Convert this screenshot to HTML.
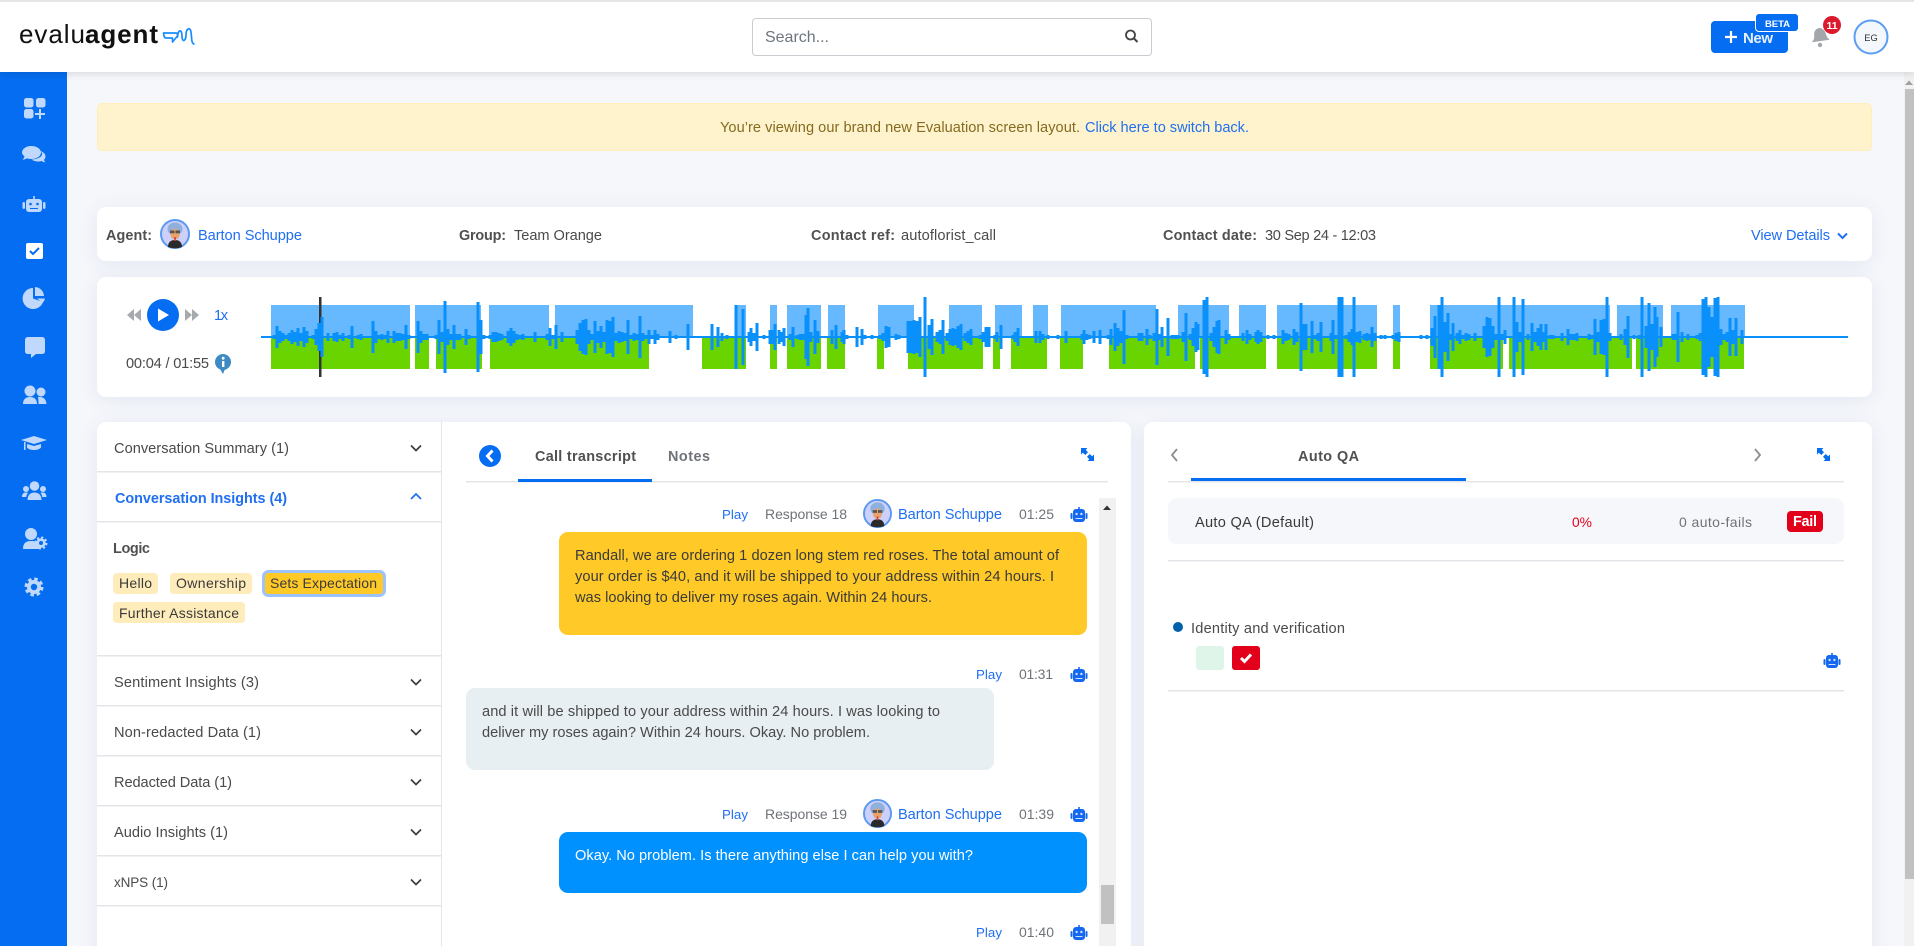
<!DOCTYPE html>
<html lang="en"><head><meta charset="utf-8"><title>Evaluation</title>
<style>
html,body{margin:0;padding:0;width:1914px;height:946px;overflow:hidden;background:#f5f7fb}
#p{position:absolute;left:0;top:0;width:1914px;height:946px;overflow:hidden;background:#f5f7fb}
.a{position:absolute;box-sizing:border-box}
.card{background:#fff;border-radius:9px;box-shadow:0 3px 20px rgba(60,80,140,.09)}
svg{position:absolute;left:0;top:0}
text{font-family:"Liberation Sans",Arial,sans-serif;font-size:14.6px;fill:#4a4a4a;white-space:pre}
.b{font-weight:700;font-size:14.4px;fill:#505050}.l{fill:#1f6ff0}.g{fill:#6f7378;font-size:14px}.d{fill:#3a3a3a}.t{font-size:14px}.pl{font-size:13.300px}
.side *{fill:#bfd8fb}
.side .h{fill:#056df1}
</style></head><body>
<div id="p">
<div class="a" style="left:0;top:0;width:1914px;height:72px;background:#fff;border-top:2px solid #e5e5e5;box-shadow:0 2px 8px rgba(0,0,0,.12);z-index:2"></div>
<div class="a" style="left:0;top:72px;width:67px;height:874px;background:#056df1"></div>
<div class="a" style="left:752px;top:18px;width:400px;height:38px;border:1px solid #c9ccd0;border-radius:4px;background:#fff;z-index:3"></div>
<div class="a" style="left:1711px;top:21px;width:77px;height:32px;background:#056df1;border-radius:4px;z-index:3"></div>
<div class="a" style="left:1755px;top:13px;width:44px;height:19px;background:#056df1;border:1px solid #fff;border-radius:4px;z-index:3"></div>
<div class="a" style="left:97px;top:103px;width:1775px;height:48px;background:#fff3cd;border:1px solid #ffeeba;border-radius:5px"></div>
<div class="a card" style="left:97px;top:207px;width:1775px;height:54px"></div>
<div class="a card" style="left:97px;top:277px;width:1775px;height:120px"></div>
<div class="a card" style="left:97px;top:422px;width:1034px;height:560px"></div>
<div class="a card" style="left:1144px;top:422px;width:728px;height:560px"></div>
<div class="a" style="left:1904px;top:72px;width:10px;height:874px;background:#f1f1f1"></div>
<div class="a" style="left:1905px;top:89px;width:9px;height:790px;background:#c1c1c1"></div>
<div class="a" style="left:1099px;top:498px;width:17px;height:448px;background:#f1f1f1"></div>
<div class="a" style="left:1101px;top:885px;width:13px;height:39px;background:#c1c1c1"></div>

<svg width="1914" height="946" viewBox="0 0 1914 946" style="z-index:5" xmlns="http://www.w3.org/2000/svg">
<defs>
<symbol id="bot" viewBox="0 0 18 15">
<rect x="8.2" y="0" width="1.6" height="3" fill="#1468f0"/><rect x="3" y="2" width="12" height="13" rx="3" fill="#1468f0"/><rect x=".5" y="6" width="2" height="6" rx="1" fill="#1468f0"/><rect x="15.5" y="6" width="2" height="6" rx="1" fill="#1468f0"/><circle cx="6.6" cy="7" r="1.2" fill="#cfe0ff"/><circle cx="11.4" cy="7" r="1.2" fill="#cfe0ff"/><rect x="5.5" y="11" width="7" height="1" fill="#cfe0ff"/>
</symbol>
<symbol id="ava" viewBox="0 0 30 30">
<circle cx="15" cy="15" r="14" fill="#cdd0fb" stroke="#5a9af0" stroke-width="2"/>
<path d="M8 28c0-5 3-7 7-7s7 2 7 7q-7 2.500-14 0z" fill="#2a2a2a"/>
<ellipse cx="15" cy="10" rx="7.500" ry="6.500" fill="#8fb0dc"/>
<rect x="10.500" y="10" width="9" height="10" rx="4" fill="#e9a36a"/>
<rect x="10" y="11.500" width="4.500" height="2.800" fill="#555"/><rect x="15.500" y="11.500" width="4.500" height="2.800" fill="#555"/>
<rect x="14.200" y="18" width="1.600" height="4" fill="#d8402c"/>
</symbol>
<symbol id="exp" viewBox="0 0 13 13">
<path d="M0 0h6.500L4.700 1.800 7 4.300 4.300 7 1.800 4.700 0 6.500zM13 13H6.500l1.800-1.800L6 8.700 8.700 6l2.500 2.300L13 6.500z" fill="#056df1"/>
</symbol>
</defs>

<!-- logo -->
<text x="19" y="43" style="font-size:26px;fill:#111" textLength="66">evalu</text>
<text x="85" y="43" class="b" style="font-size:26px;fill:#111" textLength="73">agent</text>
<path d="M163.500 33h12q2 0 2 1.500v1.500l-5 6v-4h-6q-2 0-2.500-2zM177.500 37c.5-8 4.500-8 4.500-1s4 5 4-1 4-9 5-3 0 11 3 12" fill="none" stroke="#1a8cff" stroke-width="1.700" stroke-linejoin="round" stroke-linecap="round"/>

<!-- search -->
<text x="765" y="42" style="font-size:16px;fill:#6c757d" textLength="64">Search...</text>
<circle cx="1130.500" cy="35" r="4.500" fill="none" stroke="#444" stroke-width="1.800"/><path d="M1134 38.500l3.500 3.500" stroke="#444" stroke-width="2"/>

<!-- new button -->
<path d="M1725 37h12M1731 31v12" stroke="#fff" stroke-width="2.200"/>
<text x="1743" y="43" class="b" style="font-size:15px;fill:#e6efff" textLength="30">New</text>
<text x="1765" y="27" class="b" style="font-size:9.500px;fill:#fff" textLength="25">BETA</text>
<!-- bell -->
<path d="M1811 41c3-2 3-4 3.500-8 .5-3 3-5 5.500-5s5 2 6 6c.5 3 1 5 3 7z" fill="#a3a7ab" transform="rotate(-8 1820 36)"/><circle cx="1820" cy="45" r="2.200" fill="#a3a7ab"/>
<circle cx="1832" cy="25" r="9" fill="#dc1a2e"/>
<text x="1832" y="29" class="b" text-anchor="middle" style="font-size:10.500px;fill:#fff">11</text>
<circle cx="1871" cy="37" r="16.500" fill="#f4f7fb" stroke="#5b9cf5" stroke-width="2"/>
<text x="1871" y="41" text-anchor="middle" style="font-size:9.300px;fill:#333">EG</text>

<!-- sidebar icons -->
<g class="side">
<rect x="24" y="98" width="9.500" height="9.500" rx="2.500"/><rect x="36" y="98" width="9.500" height="9.500" rx="2.500"/><rect x="24" y="109" width="9.500" height="9.500" rx="2.500"/><rect x="39" y="109" width="2" height="10"/><rect x="35" y="113" width="10" height="2"/>
<path d="M31 146c6 0 10 3 10 6.500S37 159 31 159c-1.500 0-3-.2-4-.7-1.500 1-3 1.400-4.500 1.300 1-.8 1.700-2 2-3.100C23 155 22 154 22 152.500c0-3.500 4-6.500 9-6.500z"/>
<path d="M40 151c3.500 1 5.500 3 5.500 5.500 0 1.200-.5 2.300-1.500 3.200.3 1 .8 1.900 1.500 2.500-1.500 0-3-.5-4-1.200-2.500.8-7 .8-10-1.500 5-.2 10-2 10.500-5 .2-1 .2-2 -2-3.500z"/>
<g transform="translate(0 2)"><rect x="33.200" y="194" width="1.600" height="4"/><rect x="26" y="197" width="16" height="13" rx="3"/><rect x="22.500" y="200" width="2.500" height="7" rx="1.200"/><rect x="43" y="200" width="2.500" height="7" rx="1.200"/><circle class="h" cx="30.500" cy="202" r="1.300"/><circle class="h" cx="37.500" cy="202" r="1.300"/><rect class="h" x="30" y="206" width="8" height="1"/></g>
<rect x="26" y="243" width="17" height="16" rx="2" style="fill:#fff"/><path d="M30 251l3 3 6-6" style="fill:none;stroke:#056df1;stroke-width:2"/>
<path d="M33 288a10.500 10.500 0 1 0 10 14l-10-3.500z"/><path d="M35 287a9.500 9.500 0 0 1 9 9h-9z"/><path d="M37 298.500h8a9 9 0 0 1-2.500 4.500z"/>
<path d="M28 337h14q3 0 3 3v11q0 3-3 3h-6l-5 4v-4h-3q-3 0-3-3v-11q0-3 3-3z"/>
<g transform="translate(0 3)"><circle cx="30" cy="388" r="5.500"/><path d="M23 401c0-5 3-7 7-7s7 2 7 7z"/><circle cx="41" cy="389" r="4.500"/><path d="M38 394c4-.5 8 1 8.500 7H38.500c0-3-.2-5-.5-7z"/></g>
<path d="M34 436l13 4-13 4-13-4z"/><path d="M27 444l7 2 7-2v3.500c-1 1.500-4 2.500-7 2.500s-6-1-7-2.500z"/><rect x="24" y="442" width="1.500" height="8"/>
<g transform="translate(0 2)"><circle cx="34.500" cy="484" r="4.800"/><path d="M27.500 498c0-5 3-7.500 7-7.500s7 2.500 7 7.500z"/><circle cx="26" cy="487" r="3"/><circle cx="43" cy="487" r="3"/><path d="M22 495c0-3 1.500-4.500 4-4.500 1 0 1.500.2 2 .5-1 1-1.500 2-1.700 4z"/><path d="M46.500 495c0-3-1.500-4.500-4-4.500-1 0-1.500.2-2 .5 1 1 1.500 2 1.700 4z"/></g>
<g transform="translate(0 2)"><circle cx="31" cy="532" r="6"/><path d="M23 547c0-6 3-8 8-8s7 1 8 3v5z"/><circle cx="41" cy="541" r="4.800"/><circle cx="41" cy="541" r="5.500" style="fill:none;stroke:#bfd8fb;stroke-width:2;stroke-dasharray:2.200 2.100"/><circle class="h" cx="41" cy="541" r="2"/></g>
<circle cx="34" cy="587" r="7"/><circle cx="34" cy="587" r="8" style="fill:none;stroke:#bfd8fb;stroke-width:3;stroke-dasharray:3.500 2.780"/><circle class="h" cx="34" cy="587" r="3.200"/>
</g>

<!-- banner -->
<text x="720" y="132" style="fill:#856b20" textLength="360">You’re viewing our brand new Evaluation screen layout.</text>
<text x="1085" y="132" class="l" textLength="164">Click here to switch back.</text>

<!-- agent row -->
<text x="106" y="240" class="b" textLength="46">Agent:</text>
<use href="#ava" x="160" y="219" width="30" height="30"/>
<text x="198" y="240" class="l" textLength="104">Barton Schuppe</text>
<text x="459" y="240" class="b" textLength="47">Group:</text>
<text x="514" y="240" textLength="88">Team Orange</text>
<text x="811" y="240" class="b" textLength="84">Contact ref:</text>
<text x="901" y="240" textLength="95">autoflorist_call</text>
<text x="1163" y="240" class="b" textLength="94">Contact date:</text>
<text x="1265" y="240" textLength="111">30 Sep 24 - 12:03</text>
<text x="1751" y="240" class="l" textLength="79">View Details</text>
<path d="M1838 233.500l4.500 4.500 4.500-4.500" fill="none" stroke="#1f6ff0" stroke-width="2"/>

<!-- player -->
<path d="M134 309v12l-7-6zM141 309v12l-7-6z" fill="#a6a9ad"/>
<circle cx="163" cy="315" r="16" fill="#056df1"/><path d="M158 308.500v13l11-6.500z" fill="#fff"/>
<path d="M185 309v12l7-6zM192 309v12l7-6z" fill="#a6a9ad"/>
<text x="214" y="320" class="l" textLength="14">1x</text>
<text x="126" y="368" textLength="83">00:04 / 01:55</text>
<circle cx="223" cy="362" r="8" fill="#3d8ac4"/><path d="M220 369l3 5 2-5z" fill="#3d8ac4"/><rect x="222" y="361" width="2.400" height="6" fill="#fff"/><circle cx="223.200" cy="358.200" r="1.400" fill="#fff"/>

<!-- waveform -->
<g fill="#66b8ff">
<rect x="271" y="305" width="139" height="32"/><rect x="415" y="305" width="66" height="32"/><rect x="489" y="305" width="60" height="32"/><rect x="555" y="305" width="138" height="32"/><rect x="735" y="305" width="11" height="32"/><rect x="770" y="305" width="7" height="32"/><rect x="787" y="305" width="34" height="32"/><rect x="828" y="305" width="17" height="32"/><rect x="878" y="305" width="36" height="32"/><rect x="949" y="305" width="33" height="32"/><rect x="995" y="305" width="27" height="32"/><rect x="1033" y="305" width="15" height="32"/><rect x="1061" y="305" width="95" height="32"/><rect x="1178" y="305" width="51" height="32"/><rect x="1239" y="305" width="27" height="32"/><rect x="1277" y="305" width="100" height="32"/><rect x="1393" y="305" width="7" height="32"/><rect x="1430" y="305" width="180" height="32"/><rect x="1617" y="305" width="46" height="32"/><rect x="1671" y="305" width="74" height="32"/>
</g>
<g fill="#6ad400">
<rect x="271" y="337" width="139" height="32"/><rect x="415" y="337" width="14" height="32"/><rect x="436" y="337" width="46" height="32"/><rect x="490" y="337" width="159" height="32"/><rect x="702" y="337" width="44" height="32"/><rect x="770" y="337" width="7" height="32"/><rect x="787" y="337" width="34" height="32"/><rect x="827" y="337" width="18" height="32"/><rect x="877" y="337" width="7" height="32"/><rect x="908" y="337" width="75" height="32"/><rect x="993" y="337" width="7" height="32"/><rect x="1011" y="337" width="36" height="32"/><rect x="1060" y="337" width="23" height="32"/><rect x="1109" y="337" width="86" height="32"/><rect x="1200" y="337" width="66" height="32"/><rect x="1277" y="337" width="100" height="32"/><rect x="1393" y="337" width="7" height="32"/><rect x="1430" y="337" width="73" height="32"/><rect x="1509" y="337" width="123" height="32"/><rect x="1636" y="337" width="108" height="32"/>
</g>
<rect x="319" y="297" width="2.500" height="80" fill="#333"/>
<rect x="261" y="336" width="1587" height="2" fill="#0a90fb"/>
<path fill="none" stroke="#0a90fb" stroke-width="3" d="M274 337v-2v4M277 337v-11v22M280 337v-6v12M283 337v-4v8M286 337v-2v4M289 337v-4v8M292 337v-7v14M295 337v-5v10M298 337v-9v18M301 337v-4v8M304 337v-10v20M307 337v-6v12M313 337v-2v4M316 337v-8v16M319 337v-14v28M322 337v-20v40M328 337v-4v8M334 337v-4v8M337 337v-5v10M340 337v-2v4M343 337v-4v8M349 337v-2v4M352 337v-11v22M358 337v-2v4M361 337v-3v6M373 337v-16v32M376 337v-6v12M379 337v-2v4M382 337v-3v6M385 337v-2v4M388 337v-6v12M394 337v-6v12M397 337v-4v8M400 337v-4v8M403 337v-3v6M406 337v-12v24M409 337v-2v4M418 337v-16v32M421 337v-6v12M424 337v-3v6M427 337v-3v6M436 337v-2v4M439 337v-17v34M442 337v-5v10M445 337v-36v72M448 337v-8v16M451 337v-3v6M454 337v-12v24M457 337v-3v6M460 337v-3v6M466 337v-8v16M469 337v-2v4M478 337v-35v70M481 337v-17v34M484 337v-2v4M490 337v-2v4M493 337v-5v10M496 337v-5v10M499 337v-4v8M502 337v-3v6M508 337v-6v12M511 337v-9v18M514 337v-6v12M517 337v-3v6M520 337v-2v4M523 337v-3v6M535 337v-5v10M547 337v-3v6M550 337v-9v18M553 337v-2v4M556 337v-12v24M562 337v-5v10M577 337v-7v14M580 337v-14v28M583 337v-17v34M586 337v-18v36M589 337v-7v14M592 337v-3v6M595 337v-16v32M598 337v-6v12M601 337v-11v22M604 337v-5v10M607 337v-17v34M610 337v-16v32M613 337v-20v40M616 337v-4v8M619 337v-6v12M622 337v-5v10M625 337v-4v8M628 337v-17v34M631 337v-2v4M634 337v-4v8M637 337v-3v6M640 337v-21v42M643 337v-4v8M646 337v-2v4M649 337v-7v14M652 337v-2v4M655 337v-7v14M658 337v-3v6M670 337v-6v12M676 337v-2v4M688 337v-13v26M712 337v-13v26M718 337v-10v20M722 337v-4v8M727 337v-2v4M736 337v-32v64M743 337v-28v56M749 337v-5v10M751 337v-9v18M754 337v-4v8M757 337v-14v28M764 337v-2v4M770 337v-7v14M772 337v-7v14M775 337v-13v26M779 337v-7v14M782 337v-5v10M784 337v-9v18M790 337v-3v6M793 337v-10v20M797 337v-2v4M800 337v-3v6M803 337v-3v6M806 337v-22v44M808 337v-29v58M811 337v-5v10M815 337v-17v34M818 337v-6v12M832 337v-7v14M836 337v-12v24M842 337v-5v10M844 337v-7v14M847 337v-2v4M857 337v-10v20M862 337v-8v16M865 337v-2v4M872 337v-2v4M880 337v-2v4M883 337v-4v8M886 337v-11v22M889 337v-10v20M896 337v-3v6M899 337v-2v4M908 337v-16v32M911 337v-16v32M914 337v-17v34M917 337v-16v32M920 337v-20v40M925 337v-40v80M929 337v-12v24M932 337v-18v36M937 337v-5v10M940 337v-7v14M943 337v-17v34M947 337v-4v8M950 337v-8v16M953 337v-9v18M955 337v-8v16M958 337v-11v22M961 337v-13v26M965 337v-4v8M968 337v-6v12M971 337v-8v16M980 337v-2v4M983 337v-5v10M986 337v-10v20M989 337v-10v20M995 337v-2v4M997 337v-5v10M1001 337v-12v24M1013 337v-2v4M1015 337v-5v10M1018 337v-9v18M1036 337v-6v12M1040 337v-6v12M1043 337v-3v6M1048 337v-2v4M1058 337v-2v4M1066 337v-6v12M1082 337v-3v6M1084 337v-7v14M1087 337v-3v6M1090 337v-2v4M1094 337v-6v12M1100 337v-7v14M1108 337v-2v4M1111 337v-8v16M1115 337v-14v28M1118 337v-9v18M1121 337v-6v12M1124 337v-27v54M1127 337v-2v4M1139 337v-4v8M1142 337v-4v8M1147 337v-8v16M1150 337v-2v4M1154 337v-4v8M1157 337v-28v56M1160 337v-3v6M1162 337v-10v20M1168 337v-19v38M1172 337v-2v4M1175 337v-2v4M1178 337v-2v4M1183 337v-5v10M1186 337v-24v48M1190 337v-3v6M1193 337v-9v18M1196 337v-15v30M1198 337v-13v26M1204 337v-37v74M1207 337v-40v80M1211 337v-4v8M1214 337v-10v20M1217 337v-16v32M1219 337v-17v34M1226 337v-7v14M1229 337v-3v6M1243 337v-4v8M1247 337v-7v14M1250 337v-3v6M1256 337v-5v10M1258 337v-7v14M1261 337v-5v10M1268 337v-2v4M1274 337v-2v4M1283 337v-7v14M1286 337v-4v8M1289 337v-3v6M1294 337v-8v16M1297 337v-5v10M1301 337v-34v68M1303 337v-13v26M1306 337v-13v26M1312 337v-16v32M1315 337v-2v4M1318 337v-4v8M1321 337v-15v30M1331 337v-4v8M1333 337v-17v34M1336 337v-2v4M1339 337v-40v80M1342 337v-40v80M1346 337v-2v4M1349 337v-5v10M1352 337v-8v16M1354 337v-40v80M1357 337v-5v10M1360 337v-6v12M1364 337v-3v6M1367 337v-4v8M1370 337v-3v6M1372 337v-10v20M1375 337v-4v8M1381 337v-2v4M1385 337v-2v4M1393 337v-2v4M1396 337v-4v8M1399 337v-5v10M1421 337v-2v4M1427 337v-2v4M1432 337v-9v18M1435 337v-21v42M1439 337v-32v64M1442 337v-40v80M1445 337v-15v30M1448 337v-24v48M1450 337v-3v6M1453 337v-14v28M1457 337v-4v8M1460 337v-7v14M1463 337v-2v4M1466 337v-4v8M1469 337v-3v6M1475 337v-4v8M1484 337v-11v22M1487 337v-20v40M1490 337v-19v38M1493 337v-11v22M1496 337v-3v6M1499 337v-40v80M1502 337v-3v6M1505 337v-7v14M1514 337v-40v80M1517 337v-15v30M1520 337v-5v10M1523 337v-38v76M1528 337v-3v6M1532 337v-14v28M1535 337v-5v10M1538 337v-9v18M1541 337v-13v26M1544 337v-5v10M1546 337v-13v26M1550 337v-2v4M1553 337v-2v4M1559 337v-1v2M1562 337v-4v8M1568 337v-8v16M1571 337v-3v6M1574 337v-3v6M1577 337v-4v8M1589 337v-3v6M1592 337v-2v4M1595 337v-18v36M1598 337v-5v10M1601 337v-17v34M1604 337v-18v36M1607 337v-40v80M1610 337v-4v8M1621 337v-3v6M1625 337v-8v16M1628 337v-21v42M1634 337v-2v4M1639 337v-2v4M1642 337v-40v80M1646 337v-11v22M1649 337v-34v68M1652 337v-13v26M1655 337v-30v60M1657 337v-20v40M1661 337v-10v20M1673 337v-3v6M1676 337v-3v6M1678 337v-25v50M1682 337v-5v10M1688 337v-3v6M1697 337v-2v4M1700 337v-4v8M1703 337v-38v76M1706 337v-40v80M1709 337v-30v60M1712 337v-20v40M1715 337v-39v78M1718 337v-40v80M1721 337v-8v16M1724 337v-3v6M1727 337v-5v10M1730 337v-19v38M1733 337v-7v14M1736 337v-19v38M1742 337v-7v14"/>

<!-- accordion -->
<rect x="441" y="422" width="1" height="524" fill="#e3e5e8"/>
<g fill="#e3e5e8">
<rect x="97" y="471" width="344" height="1.500"/><rect x="97" y="521" width="344" height="1.500"/><rect x="97" y="655" width="344" height="1.500"/><rect x="97" y="705" width="344" height="1.500"/><rect x="97" y="755" width="344" height="1.500"/><rect x="97" y="805" width="344" height="1.500"/><rect x="97" y="855" width="344" height="1.500"/><rect x="97" y="905" width="344" height="1.500"/>
</g>
<text x="114" y="453" textLength="175">Conversation Summary (1)</text>
<text x="115" y="503" class="b l" textLength="172" style="fill:#1f6ff0">Conversation Insights (4)</text>
<text x="113" y="553" class="b" style="font-size:14.500px" textLength="37">Logic</text>
<text x="114" y="687" textLength="145">Sentiment Insights (3)</text>
<text x="114" y="737" textLength="147">Non-redacted Data (1)</text>
<text x="114" y="787" textLength="118">Redacted Data (1)</text>
<text x="114" y="837" textLength="114">Audio Insights (1)</text>
<text x="114" y="887" style="font-size:13.500px" textLength="54">xNPS (1)</text>
<g fill="none" stroke="#3d3d3d" stroke-width="1.700">
<path d="M411 445.500l5 5 5-5M411 679.500l5 5 5-5M411 729.500l5 5 5-5M411 779.500l5 5 5-5M411 829.500l5 5 5-5M411 879.500l5 5 5-5"/>
</g>
<path d="M411 499l5-5 5 5" fill="none" stroke="#1f6ff0" stroke-width="1.700"/>
<rect x="113" y="573" width="45" height="21" rx="4" fill="#ffecbb"/>
<rect x="170" y="573" width="82" height="21" rx="4" fill="#ffecbb"/>
<rect x="263.500" y="571.500" width="121" height="24" rx="5" fill="#ffc928" stroke="#9cc2ff" stroke-width="3"/>
<rect x="113" y="602" width="132" height="21" rx="4" fill="#ffecbb"/>
<text x="119" y="588" class="d t" textLength="33">Hello</text>
<text x="176" y="588" class="d t" textLength="70">Ownership</text>
<text x="270" y="588" class="d t" textLength="107">Sets Expectation</text>
<text x="119" y="618" class="d t" textLength="120">Further Assistance</text>

<!-- transcript -->
<circle cx="490" cy="456" r="11" fill="#056df1"/><path d="M492.500 450.500l-5 5.500 5 5.500" fill="none" stroke="#fff" stroke-width="3"/>
<text x="535" y="461" class="b" textLength="101">Call transcript</text>
<text x="668" y="461" class="b" style="fill:#6f7378" textLength="42">Notes</text>
<rect x="466" y="481" width="642" height="1.500" fill="#e3e5e8"/>
<rect x="518" y="479" width="134" height="3" fill="#056df1"/>
<use href="#exp" x="1081" y="448" width="13" height="13"/>
<path d="M1103 510l4-4.500 4 4.500z" fill="#333"/>

<text x="722" y="519" class="l pl" textLength="26">Play</text>
<text x="765" y="519" class="g" textLength="82">Response 18</text>
<use href="#ava" x="863" y="499" width="29" height="29"/>
<text x="898" y="519" class="l" textLength="104">Barton Schuppe</text>
<text x="1019" y="519" class="g" textLength="35">01:25</text>
<use href="#bot" x="1070" y="507" width="18" height="15"/>
<rect x="559" y="532" width="528" height="103" rx="9" fill="#ffc928"/>
<text x="575" y="560" class="d" textLength="484">Randall, we are ordering 1 dozen long stem red roses. The total amount of</text>
<text x="575" y="581" class="d" textLength="479">your order is $40, and it will be shipped to your address within 24 hours. I</text>
<text x="575" y="602" class="d" textLength="357">was looking to deliver my roses again. Within 24 hours.</text>

<text x="976" y="679" class="l pl" textLength="26">Play</text>
<text x="1019" y="679" class="g" textLength="34">01:31</text>
<use href="#bot" x="1070" y="667" width="18" height="15"/>
<rect x="466" y="688" width="528" height="82" rx="9" fill="#e8eff2"/>
<text x="482" y="716" textLength="458">and it will be shipped to your address within 24 hours. I was looking to</text>
<text x="482" y="737" textLength="388">deliver my roses again? Within 24 hours. Okay. No problem.</text>

<text x="722" y="819" class="l pl" textLength="26">Play</text>
<text x="765" y="819" class="g" textLength="82">Response 19</text>
<use href="#ava" x="863" y="799" width="29" height="29"/>
<text x="898" y="819" class="l" textLength="104">Barton Schuppe</text>
<text x="1019" y="819" class="g" textLength="35">01:39</text>
<use href="#bot" x="1070" y="807" width="18" height="15"/>
<rect x="559" y="832" width="528" height="61" rx="9" fill="#0091ff"/>
<text x="575" y="860" style="fill:#fff" textLength="398">Okay. No problem. Is there anything else I can help you with?</text>

<text x="976" y="937" class="l pl" textLength="26">Play</text>
<text x="1019" y="937" class="g" textLength="35">01:40</text>
<use href="#bot" x="1070" y="925" width="18" height="15"/>

<!-- right panel -->
<path d="M1177 449l-5 6 5 6" fill="none" stroke="#8a8d91" stroke-width="1.800"/>
<path d="M1755 449l5 6-5 6" fill="none" stroke="#8a8d91" stroke-width="1.800"/>
<text x="1298" y="461" class="b" textLength="61">Auto QA</text>
<rect x="1168" y="481" width="676" height="1.500" fill="#e3e5e8"/>
<rect x="1191" y="478" width="275" height="3" fill="#056df1"/>
<use href="#exp" x="1817" y="448" width="13" height="13"/>
<rect x="1168" y="498" width="676" height="46" rx="9" fill="#f5f7fb"/>
<text x="1195" y="527" class="d" textLength="119">Auto QA (Default)</text>
<text x="1572" y="527" style="fill:#e3001b;font-size:13.800px">0%</text>
<text x="1679" y="527" class="g" textLength="73">0 auto-fails</text>
<rect x="1787" y="511" width="36" height="21" rx="4" fill="#e3001b"/>
<text x="1793" y="526" class="b" style="fill:#fff" textLength="24">Fail</text>
<rect x="1168" y="560" width="676" height="1.500" fill="#e3e5e8"/>
<circle cx="1178" cy="627" r="5" fill="#0062a8"/>
<text x="1191" y="633" textLength="154">Identity and verification</text>
<rect x="1196" y="646" width="28" height="24" rx="3" fill="#e0f5e9"/>
<rect x="1232" y="646" width="28" height="24" rx="3" fill="#e3001b"/>
<path d="M1241 658l3.500 3.500 6.500-7" fill="none" stroke="#fff" stroke-width="3"/>
<use href="#bot" x="1823" y="653" width="18" height="15"/>
<rect x="1168" y="690" width="676" height="1.500" fill="#e3e5e8"/>
<path d="M1905 85l4-4.500 4 4.500z" fill="#a0a0a0"/>
</svg>
</div>
</body></html>
